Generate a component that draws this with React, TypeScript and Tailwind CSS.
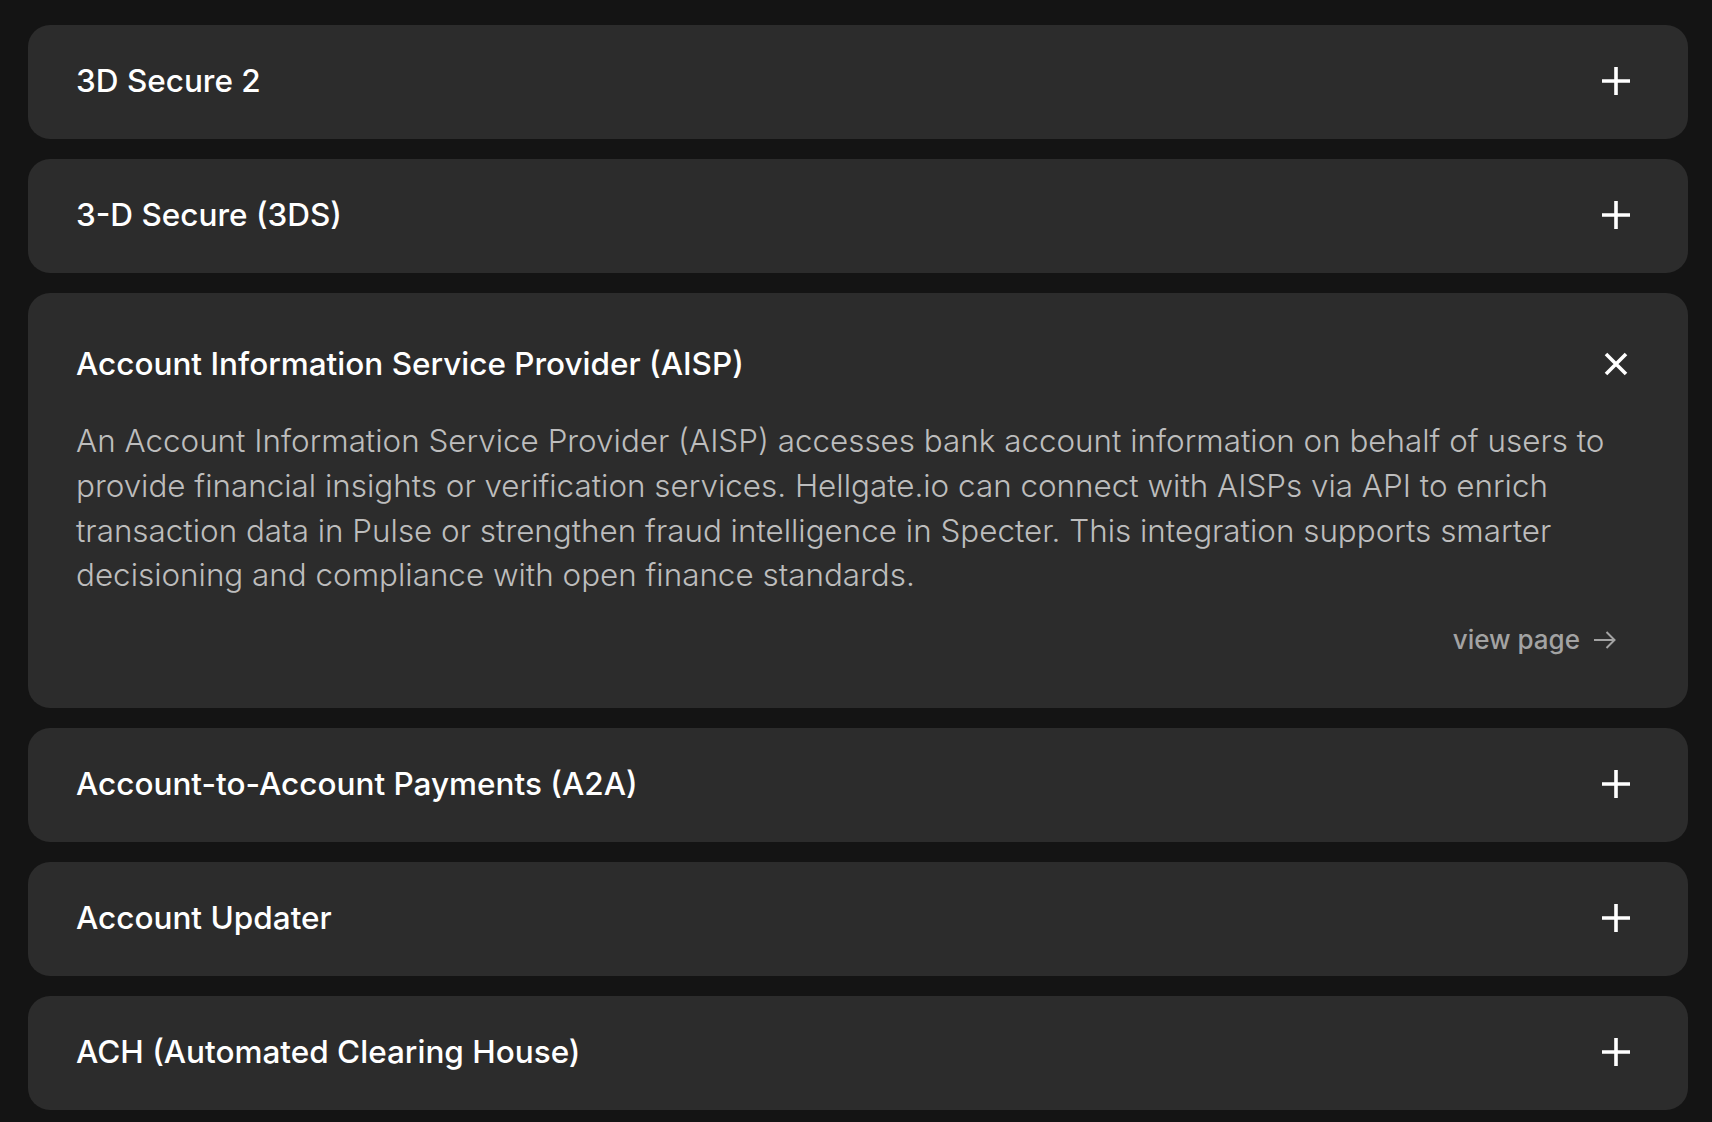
import { useState } from "react";

const items = [
  { title: "3D Secure 2", body: "" },
  { title: "3-D Secure (3DS)", body: "" },
  {
    title: "Account Information Service Provider (AISP)",
    body: "An Account Information Service Provider (AISP) accesses bank account information on behalf of users to provide financial insights or verification services. Hellgate.io can connect with AISPs via API to enrich transaction data in Pulse or strengthen fraud intelligence in Specter. This integration supports smarter decisioning and compliance with open finance standards.",
  },
  { title: "Account-to-Account Payments (A2A)", body: "" },
  { title: "Account Updater", body: "" },
  { title: "ACH (Automated Clearing House)", body: "" },
];

function PlusIcon() {
  return (
    <svg width="28" height="28" viewBox="0 0 28 28" fill="none">
      <path d="M14 0v28M0 14h28" stroke="white" strokeWidth="3.6" />
    </svg>
  );
}

function CloseIcon() {
  return (
    <svg width="24" height="24" viewBox="0 0 24 24" fill="none">
      <path d="M2 2l20 20M22 2L2 22" stroke="white" strokeWidth="3.6" />
    </svg>
  );
}

function ArrowIcon() {
  return (
    <svg width="22" height="18" viewBox="0 0 22 18" fill="none">
      <path d="M0 9h20.5M12.5 1l8 8-8 8" stroke="#a3a3a3" strokeWidth="2" />
    </svg>
  );
}

export default function App() {
  const [open, setOpen] = useState<number | null>(2);

  return (
    <div
      className="min-h-screen bg-[#141414] pt-[25px] pl-[28px] pr-[24px] flex flex-col gap-5"
      style={{ fontFamily: "Inter, 'Noto Sans', sans-serif" }}
    >
      {items.map((item, i) =>
        open === i ? (
          <div key={item.title} className="rounded-[22px] bg-[#2c2c2c] pl-12 pr-14 pt-[53px] pb-[52px]">
            <button
              onClick={() => setOpen(null)}
              className="w-full flex items-center justify-between text-left"
            >
              <span className="text-[31.5px] leading-[36px] font-medium text-white">{item.title}</span>
              <span className="w-8 h-8 flex items-center justify-center">
                <CloseIcon />
              </span>
            </button>
            <p className="mt-[37px] text-[31.4px] leading-[44.8px] font-light text-[#bdbdbd]">{item.body}</p>
            <div className="mt-[26px] flex justify-end mr-4">
              <a href="#" className="flex items-center gap-[14px] text-[26px] leading-[32px] font-medium text-[#a3a3a3]">
                view page
                <ArrowIcon />
              </a>
            </div>
          </div>
        ) : (
          <button
            key={item.title}
            onClick={() => setOpen(i)}
            className="h-[114px] rounded-[22px] bg-[#2c2c2c] pl-12 pr-14 pb-[2px] flex items-center justify-between text-left"
          >
            <span className="text-[31.5px] leading-[36px] font-medium text-white">{item.title}</span>
            <span className="w-8 h-8 flex items-center justify-center">
              <PlusIcon />
            </span>
          </button>
        )
      )}
    </div>
  );
}
